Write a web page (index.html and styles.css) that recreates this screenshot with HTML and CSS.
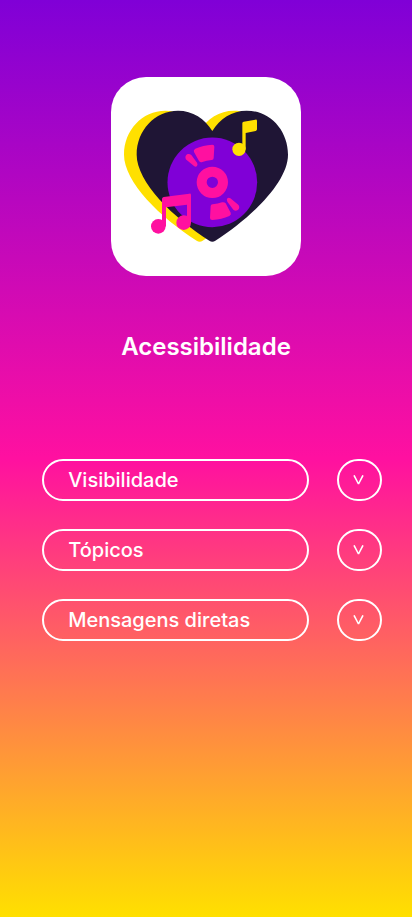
FILE: index.html
```html
<!DOCTYPE html>
<html lang="pt-BR">
<head>
<meta charset="utf-8">
<meta name="viewport" content="width=device-width, initial-scale=1">
<title>Acessibilidade</title>
<link rel="stylesheet" href="styles.css">
</head>
<body>
<main class="screen">
  <div class="logo">
    <svg class="logo-art" viewBox="15 15 570 597" aria-hidden="true">
      <path fill="#ffe000" d="M281 177C259 140 222 116 178 116C108 116 54 175 54 248C54 330 164 437 272 506Q281 512 290 506C398 437 508 330 508 248C508 175 454 116 384 116C340 116 303 140 281 177Z"/>
      <path fill="#1f1535" d="M319 177C297 140 260 116 216 116C146 116 92 175 92 248C92 330 202 437 310 506Q319 512 328 506C436 437 546 330 546 248C546 175 492 116 422 116C378 116 341 140 319 177Z"/>
      <circle cx="319" cy="331" r="134.500" fill="#8000d7"/>
      <circle cx="319" cy="331" r="32" fill="none" stroke="#ff10a0" stroke-width="30"/>
      <g fill="#ff10a0">
        <path d="M268 230Q291 219 319 218Q325 218 325 224L323 258Q323 264 317 264Q301 265 289 270Q283 272 279 267L264 240Q261 234 268 230Z"/>
        <path d="M239 260C235 249 247 241 256 249L273 272Q276 278 273 282Q269 286 264 282L242 264Q240 262 239 260Z"/>
        <path d="M370 432Q347 443 319 444Q312 444 312 438L314 402Q314 397 320 397Q336 396 348 391Q355 389 359 394L374 422Q377 428 370 432Z"/>
        <path d="M399 402C403 412 391 421 382 413L364 389Q361 383 364 379Q368 375 373 379L395 397Q398 399 399 402Z"/>
      </g>
      <g fill="#ffe000">
        <circle cx="399" cy="232" r="20"/>
        <path d="M409 154Q409 150 413 149L448 143Q453 142 453 147L453 172Q453 176 449 177L419 183L419 232L409 232Z"/>
      </g>
      <g fill="#ff10a0">
        <circle cx="157" cy="463" r="22"/>
        <circle cx="233" cy="452" r="22"/>
        <path d="M168 381Q168 376 173 375L250 365Q255 364 255 369L255 452L243 452L243 398L180 406L180 463L168 463Z"/>
      </g>
    </svg>
  </div>
  <h1 class="title">Acessibilidade</h1>
  <div class="options">
    <div class="option"><div class="option-label">Visibilidade</div><button class="toggle" aria-label="Expandir"><svg class="chevron" viewBox="0 0 11 10" aria-hidden="true"><path d="M1 .3L5.500 9L10 .3"/></svg></button></div>
    <div class="option"><div class="option-label">Tópicos</div><button class="toggle" aria-label="Expandir"><svg class="chevron" viewBox="0 0 11 10" aria-hidden="true"><path d="M1 .3L5.500 9L10 .3"/></svg></button></div>
    <div class="option"><div class="option-label">Mensagens diretas</div><button class="toggle" aria-label="Expandir"><svg class="chevron" viewBox="0 0 11 10" aria-hidden="true"><path d="M1 .3L5.500 9L10 .3"/></svg></button></div>
  </div>
</main>
</body>
</html>
```
FILE: styles.css
```css
* {
  box-sizing: border-box;
}

body {
  margin: 0;
  font-family: Inter, "Liberation Sans", sans-serif;
  color: #fff;
}

.screen {
  height: 917px;
  padding-top: 77px;
  display: flex;
  flex-direction: column;
  align-items: center;
  background: linear-gradient(#8000d7 0%, #ff10a0 50%, #ffe000 100%);
}

.logo {
  width: 190px;
  height: 199px;
  border-radius: 35px;
  background: #fff;
}

.logo-art {
  display: block;
  width: 190px;
  height: 199px;
}

.title {
  margin: 56px 0 0;
  font-size: 24px;
  line-height: 29px;
  font-weight: 600;
}

.options {
  align-self: stretch;
  margin: 98px 30px 0 42px;
  display: flex;
  flex-direction: column;
  gap: 28px;
}

.option {
  display: flex;
  justify-content: space-between;
}

.option-label {
  width: 267px;
  height: 42px;
  padding-left: 24.200px;
  border: 2px solid #fff;
  border-radius: 21px;
  font-size: 20px;
  line-height: 38px;
  font-weight: 500;
}

.toggle {
  width: 45px;
  height: 42px;
  padding: 0 2px 0 0;
  display: flex;
  align-items: center;
  justify-content: center;
  border: 2px solid #fff;
  border-radius: 21px;
  background: none;
  color: inherit;
}

.chevron {
  width: 11px;
  height: 10px;
  fill: none;
  stroke: currentColor;
  stroke-width: 1.6;
  stroke-linejoin: bevel;
}
```
